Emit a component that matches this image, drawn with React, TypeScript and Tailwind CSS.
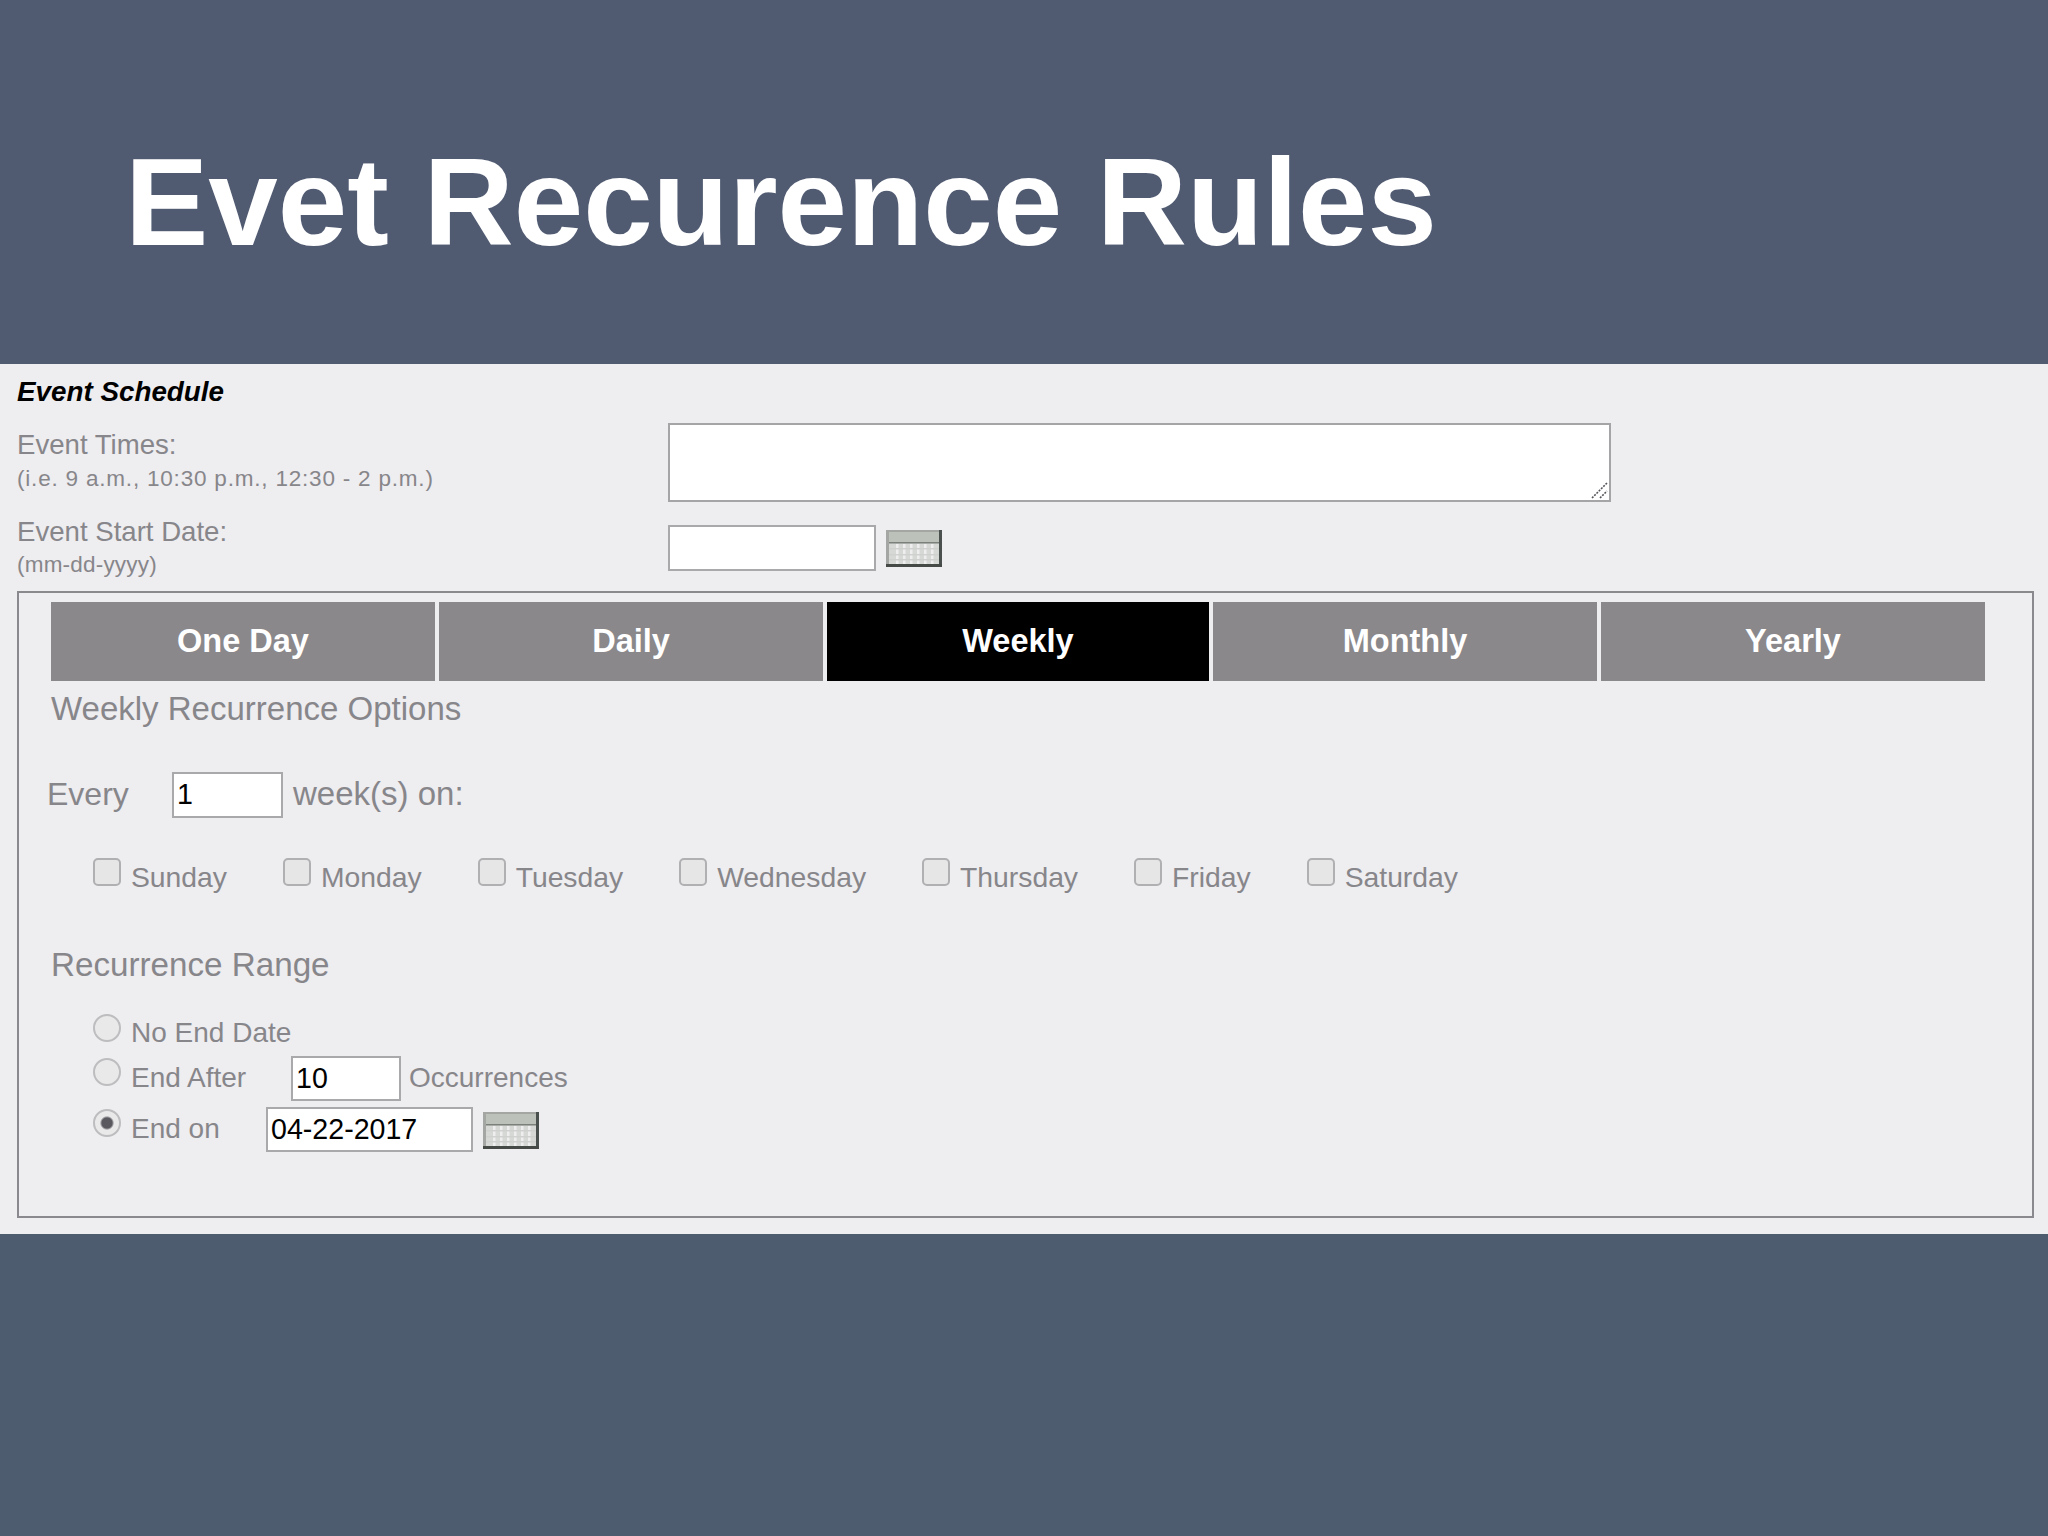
const fontStack = { fontFamily: '"Liberation Sans", Arial, sans-serif' };

const tabs = ['One Day', 'Daily', 'Weekly', 'Monthly', 'Yearly'];
const days = ['Sunday', 'Monday', 'Tuesday', 'Wednesday', 'Thursday', 'Friday', 'Saturday'];

const inputClass =
  'block border-2 border-[#a9a9ac] bg-white pl-[3px] text-[28.6px] text-black outline-none';
const checkClass =
  'block h-[28px] w-[28px] shrink-0 appearance-none rounded-[5px] border-2 border-[#b0b0b2] bg-[#e6e6e7]';
const radioClass =
  'block h-[28px] w-[28px] shrink-0 appearance-none rounded-full border-2 border-[#bdbdbf] bg-[#e9e9ea] checked:bg-[radial-gradient(circle,#59595f_0_30%,#e9e9ea_42%)]';

function CalendarIcon() {
  return (
    <svg width="56" height="37" viewBox="0 0 56 37" className="block shrink-0">
      <rect width="56" height="37" fill="#a3a6a3" />
      <rect x="3" y="2" width="50" height="11" fill="#bcc2ba" />
      <rect x="3" y="13" width="50" height="21" fill="#d6d8d6" />
      <rect x="3" y="12" width="50" height="1.5" fill="#7b807b" />
      {[10, 17, 24, 31, 38, 45].map((x) => (
        <rect key={x} x={x} y="14" width="2.5" height="20" fill="#eeeeee" />
      ))}
      {[18, 24, 29].map((y) => (
        <rect key={y} x="3" y={y} width="50" height="1.5" fill="#cfd1cf" />
      ))}
      <rect x="53" y="0" width="3" height="37" fill="#4a504d" />
      <rect x="0" y="34" width="56" height="3" fill="#454a47" />
    </svg>
  );
}

function Resizer() {
  return (
    <svg width="17" height="17" viewBox="0 0 17 17" className="absolute bottom-[3px] right-[3px]">
      <path d="M1 16 L16 1 M9 16 L16 9" stroke="#55555a" strokeWidth="1.6" strokeDasharray="2 1.2" fill="none" />
    </svg>
  );
}

export default function App() {
  return (
    <div className="flex h-[1536px] w-[2048px] flex-col overflow-hidden bg-[#4e5c6f]" style={fontStack}>
      <header className="flex h-[364px] items-center bg-[#505b72] pl-[125px] pt-[40px]">
        <h1 className="text-[124.9px] font-bold leading-none text-white">Evet Recurence Rules</h1>
      </header>

      <section className="h-[870px] bg-[#eeedf0] pl-[17px] pr-[14px] text-[#87868a]">
        <div className="pt-[14px] text-[27.8px] font-bold italic leading-[28px] text-black">Event Schedule</div>

        <div className="mt-[17px] flex h-[92px]">
          <div className="w-[651px] pt-[5px]">
            <div className="text-[27.6px] leading-[34px]">Event Times:</div>
            <div className="text-[22.5px] leading-[34px] tracking-[0.8px]">(i.e. 9 a.m., 10:30 p.m., 12:30 - 2 p.m.)</div>
          </div>
          <div className="relative h-[79px] w-[943px]">
            <textarea className="block h-full w-full resize-none border-2 border-[#a5a5a8] bg-white outline-none" />
            <Resizer />
          </div>
        </div>

        <div className="flex h-[76px]">
          <div className="w-[651px]">
            <div className="text-[27.6px] leading-[33px]">Event Start Date:</div>
            <div className="text-[22.5px] leading-[34px] tracking-[0.2px]">(mm-dd-yyyy)</div>
          </div>
          <input className={`${inputClass} mt-[10px] h-[46px] w-[208px]`} />
          <div className="ml-[10px] mt-[15px]">
            <CalendarIcon />
          </div>
        </div>

        <div className="h-[627px] border-2 border-[#8a8a8e] pl-[29px] pt-[9px]">
          <div className="ml-[3px] grid h-[79px] w-[1934px] grid-cols-[384px_384px_382px_384px_384px] gap-[4px]">
            {tabs.map((tab) => (
              <div
                key={tab}
                className={`flex items-center justify-center text-[32.5px] font-bold text-white ${
                  tab === 'Weekly' ? 'bg-black' : 'bg-[#8a888b]'
                }`}
              >
                {tab}
              </div>
            ))}
          </div>

          <div className="ml-[3px] mt-[8px] text-[33px] leading-[40px]">Weekly Recurrence Options</div>

          <div className="mt-[43px] flex h-[46px] items-center text-[33px]">
            <span className="-ml-[1px] w-[125px] pb-[3px] text-[32px]">Every</span>
            <input className={`${inputClass} h-[46px] w-[111px] pb-[2px]`} defaultValue="1" />
            <span className="ml-[10px] pb-[3px]">week(s) on:</span>
          </div>

          <div className="ml-[45px] mt-[40px] flex gap-[56px] text-[28.3px] leading-[38px]">
            {days.map((day) => (
              <label key={day} className="flex h-[40px] gap-[10px]">
                <input type="checkbox" className={checkClass} />
                <span>{day}</span>
              </label>
            ))}
          </div>

          <div className="ml-[3px] mt-[47px] text-[33.2px] leading-[40px]">Recurrence Range</div>

          <div className="ml-[45px] mt-[28px] text-[28px] leading-[40px]">
            <label className="flex h-[45px] gap-[10px]">
              <input type="radio" name="range" className={`${radioClass} mt-[1px]`} />
              <span>No End Date</span>
            </label>
            <label className="flex h-[51px] gap-[10px]">
              <input type="radio" name="range" className={radioClass} />
              <span className="w-[150px]">End After</span>
              <input className={`${inputClass} -mt-[2px] h-[45px] w-[110px]`} defaultValue="10" />
              <span className="-ml-[2px]">Occurrences</span>
            </label>
            <label className="flex gap-[10px]">
              <input type="radio" name="range" className={radioClass} defaultChecked />
              <span className="w-[125px]">End on</span>
              <input className={`${inputClass} -mt-[2px] h-[45px] w-[207px]`} defaultValue="04-22-2017" />
              <div className="mt-[3px]">
                <CalendarIcon />
              </div>
            </label>
          </div>
        </div>
      </section>
    </div>
  );
}
